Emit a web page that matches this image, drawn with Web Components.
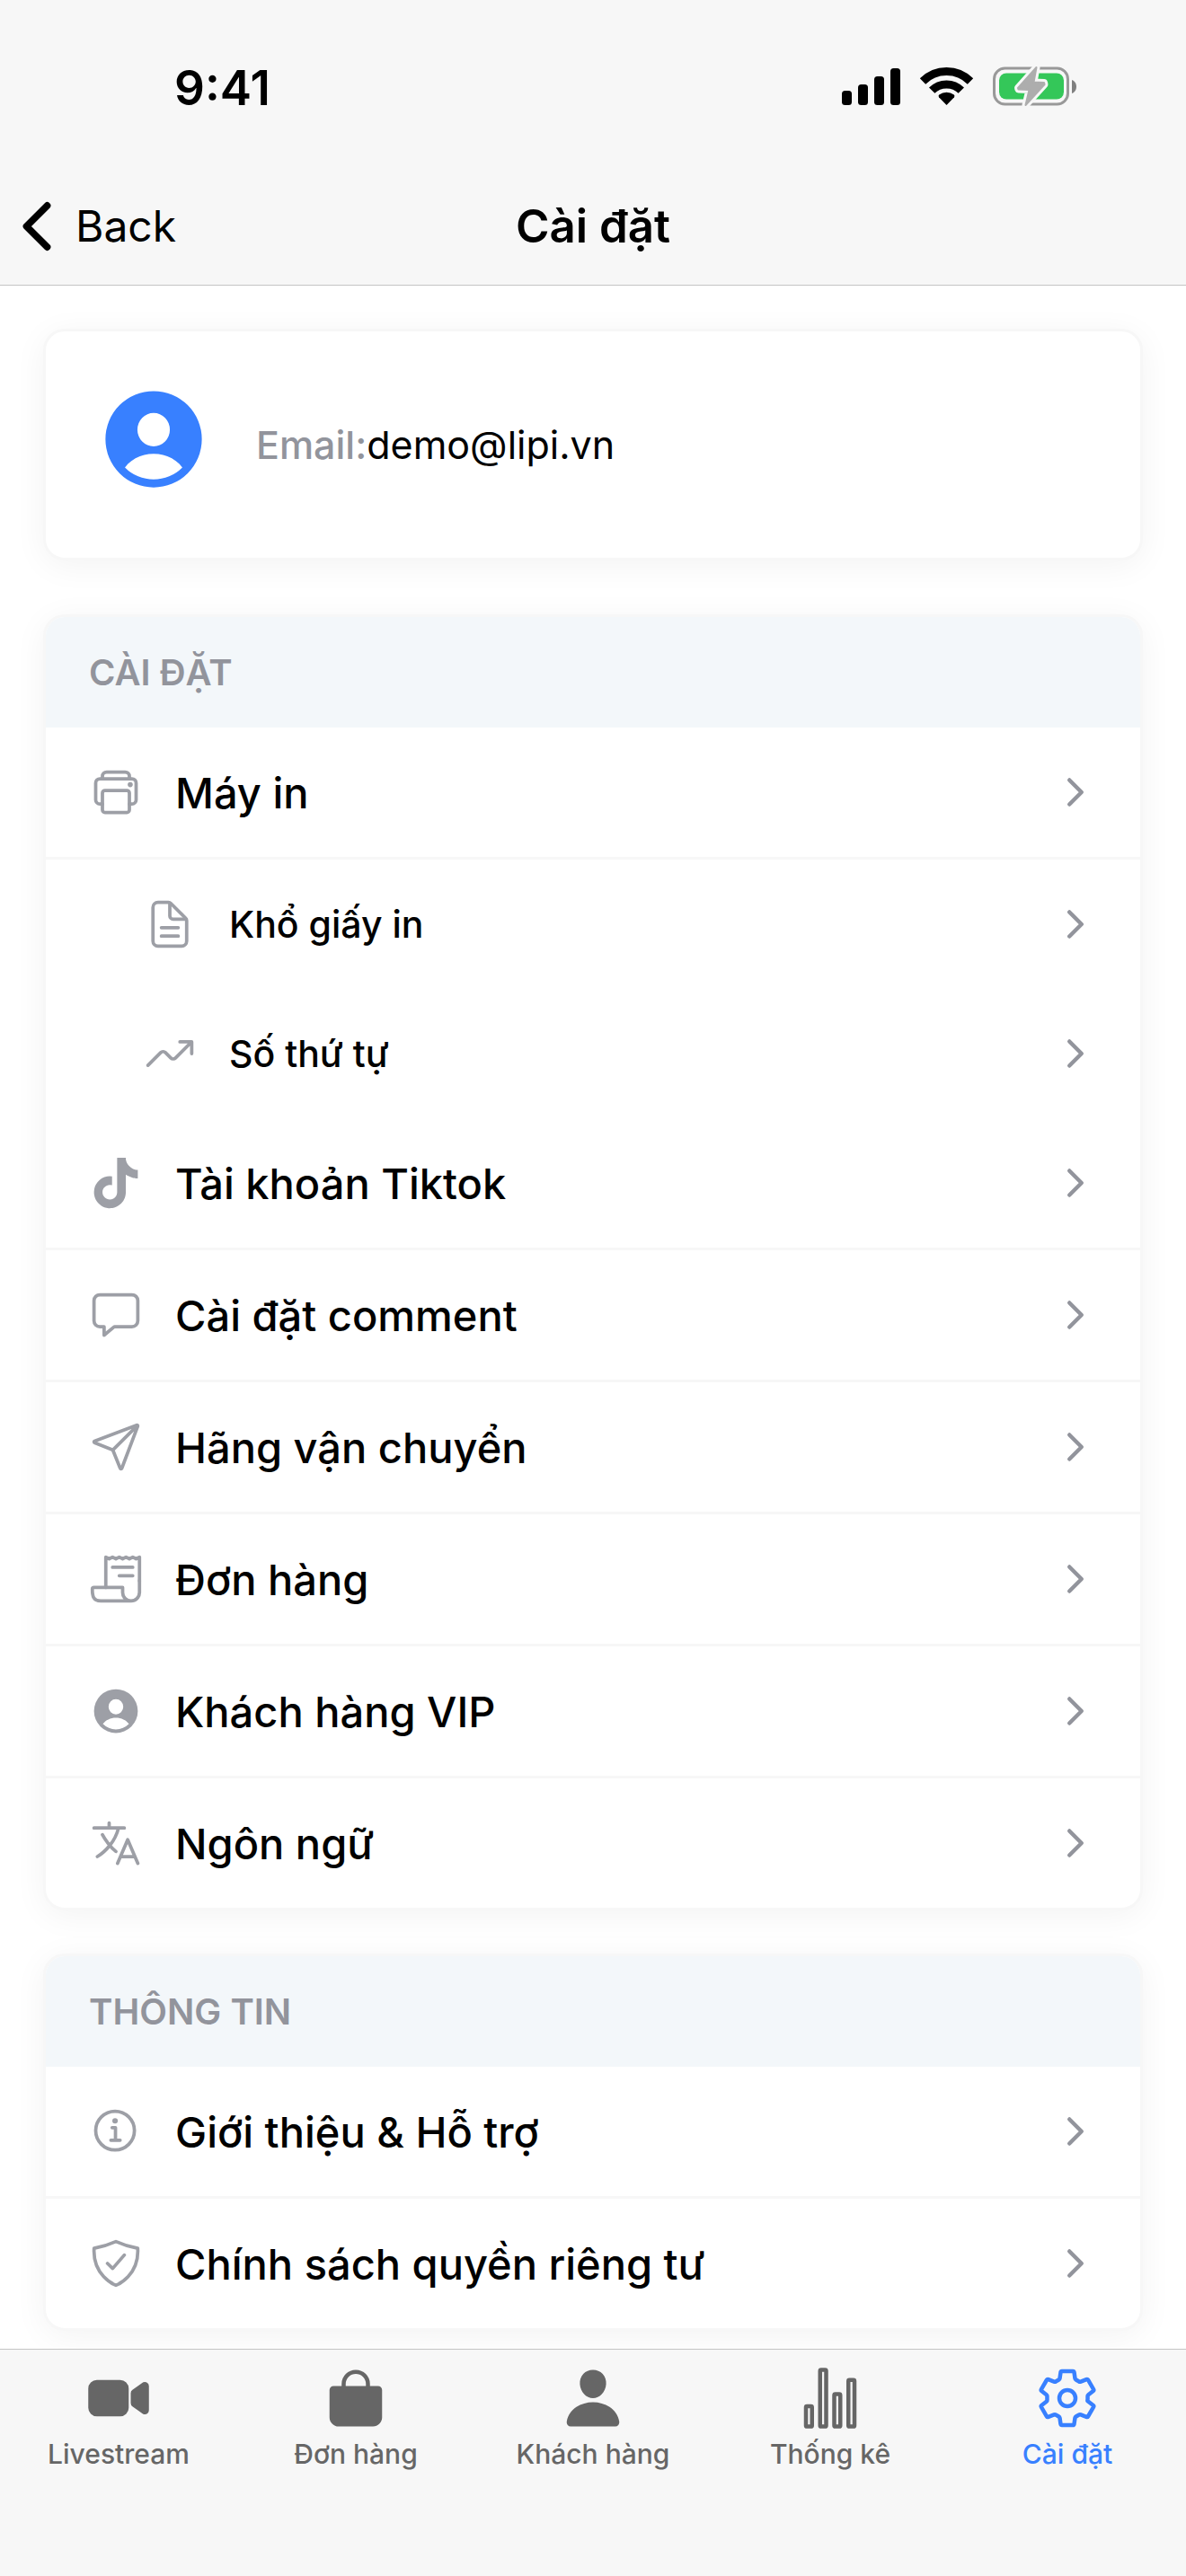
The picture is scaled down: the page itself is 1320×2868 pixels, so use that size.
<!DOCTYPE html>
<html lang="vi">
<head>
<meta charset="utf-8">
<meta name="viewport" content="width=device-width, initial-scale=1">
<title>Cài đặt</title>
<style>
    body {
        margin: 0;
        background: #fff;
        color: #000;
        font-family: Inter, "Noto Sans", "Liberation Sans", sans-serif;
    }
</style>
</head>
<body>

<template id="appIconTemplate">
    <style>
        :host {
            display: block;
            flex: none;
            width: var(--icon-size, 60px);
            height: var(--icon-size, 60px);
        }

        svg {
            display: block;
            width: 100%;
            height: 100%;
            fill: currentColor;
        }

        .line {
            fill: none;
            stroke: currentColor;
            stroke-width: 32;
            stroke-linecap: round;
            stroke-linejoin: round;
        }

        .bold {
            stroke-width: 48;
        }
    </style>
    <svg viewBox="0 0 512 512" aria-hidden="true"></svg>
</template>

<template id="statusBarTemplate">
    <style>
        :host {
            display: flex;
            box-sizing: border-box;
            height: 186px;
            padding: 10px 122px 0 194px;
            align-items: center;
            justify-content: space-between;
            font-size: 53px;
            font-weight: 600;
        }

        .icons {
            display: flex;
            align-items: center;
            gap: 23px;
            padding-bottom: 4px;
        }

        svg {
            display: block;
            overflow: visible;
        }
    </style>
    <slot></slot>
    <div class="icons">
        <svg width="65" height="42" viewBox="0 0 65 42" aria-hidden="true">
            <rect x="0" y="26" width="11" height="16" rx="3.5"/>
            <rect x="18" y="19" width="11" height="23" rx="3.5"/>
            <rect x="36" y="10" width="11" height="32" rx="3.5"/>
            <rect x="54" y="1" width="11" height="41" rx="3.5"/>
        </svg>
        <svg width="57" height="42" viewBox="0 0 57 42" aria-hidden="true">
            <g fill="none" stroke="#000" stroke-width="9">
                <path d="M2 15.5a37.5 37.5 0 0 1 53 0"/>
                <path d="M12.2 25.7a23 23 0 0 1 32.6 0"/>
            </g>
            <path d="M28.5 42L20 33.2a2 2 0 0 1 .2-2.6 13.4 13.4 0 0 1 16.6 0 2 2 0 0 1 .2 2.6z"/>
        </svg>
        <svg width="93" height="44" viewBox="0 0 93 44" aria-hidden="true">
            <rect x="1.5" y="2" width="82" height="40" rx="12" fill="none" stroke="#999" stroke-width="3"/>
            <rect x="7" y="7.5" width="72" height="29" rx="8" fill="#34c759"/>
            <path d="M88 15c3 1 5 4 5 7.5S91 29 88 30z" fill="#808080"/>
            <g stroke-linejoin="round">
                <path d="M48.5 1L28 24l.5 1.500 12 .5-4 17L57.500 20l-.5-2-11.500-.5z" fill="#f7f7f7" stroke="#f7f7f7" stroke-width="8"/>
                <path d="M48.5 1L28 24l.5 1.500 12 .5-4 17L57.500 20l-.5-2-11.500-.5z" fill="#adadad" stroke="#adadad" stroke-width="2"/>
            </g>
        </svg>
    </div>
</template>

<template id="navBarTemplate">
    <style>
        :host {
            display: grid;
            grid-template-columns: 1fr auto 1fr;
            align-items: center;
            height: 131px;
            border-bottom: 1px solid #c4c4c4;
            --icon-size: 82px;
        }

        button {
            display: flex;
            align-items: center;
            justify-self: start;
            gap: 2px;
            padding: 0;
            border: 0;
            background: none;
            color: inherit;
            font: inherit;
            font-size: 48px;
            cursor: pointer;
        }

        h1 {
            margin: 0;
            font-size: 51px;
            font-weight: 600;
        }
    </style>
    <button type="button"><app-icon name="chevron-back"></app-icon><slot name="back"></slot></button>
    <h1><slot></slot></h1>
</template>

<template id="profileCardTemplate">
    <style>
        :host {
            display: flex;
            align-items: center;
            gap: 48px;
            margin: 48px 48px 60px;
            padding: 54px;
            border: 3px solid #f7f7f7;
            border-radius: 24px;
            background: #fff;
            box-shadow: 0 6px 36px rgba(0, 0, 0, .05);
            font-size: 43px;
            --icon-size: 132px;
        }

        app-icon {
            margin-bottom: 12px;
            color: #3880ff;
        }

        .label {
            color: #92949c;
            font-weight: 500;
        }
    </style>
    <app-icon name="person-circle"></app-icon>
    <div><span class="label"><slot name="label"></slot></span><slot></slot></div>
</template>

<template id="settingsGroupTemplate">
    <style>
        :host {
            display: block;
            margin: 0 48px 48px;
            border: 3px solid #f7f7f7;
            border-radius: 24px;
            background: #fff;
            box-shadow: 0 6px 36px rgba(0, 0, 0, .05);
        }

        :host(:last-of-type) {
            margin-bottom: 0;
        }

        h2 {
            margin: 0;
            padding: 0 48px;
            border-radius: 21px 21px 0 0;
            background: #f3f7fa;
            color: #92949c;
            font-size: 40px;
            font-weight: 600;
            line-height: 123px;
        }
    </style>
    <h2><slot name="heading"></slot></h2>
    <slot></slot>
</template>

<template id="settingsItemTemplate">
    <style>
        :host {
            display: block;
            border-bottom: 3px solid #f7f7f7;
            font-size: 47px;
            font-weight: 500;
        }

        :host([plain]), :host(:last-child) {
            border-bottom: 0;
        }

        :host([sub]) {
            font-size: 41px;
        }

        a {
            display: flex;
            align-items: center;
            gap: 36px;
            min-height: 144px;
            padding: 0 48px;
            color: inherit;
            text-decoration: none;
        }

        :host([sub]) a {
            padding-left: 108px;
        }

        span {
            flex: 1;
        }

        .lead {
            color: #9d9fa6;
        }

        .arrow {
            color: #92949c;
            --icon-size: 48px;
        }
    </style>
    <a href="#">
        <app-icon class="lead"></app-icon>
        <span><slot></slot></span>
        <app-icon class="arrow" name="chevron-forward"></app-icon>
    </a>
</template>

<template id="tabItemTemplate">
    <style>
        :host {
            display: block;
            flex: 1 1 0;
            color: #666;
            font-size: 30px;
            font-weight: 500;
            line-height: 36px;
            --icon-size: 72px;
        }

        :host([selected]) {
            color: #3880ff;
        }

        a {
            display: flex;
            flex-direction: column;
            align-items: center;
            gap: 8px;
            color: inherit;
            text-decoration: none;
            white-space: nowrap;
        }
    </style>
    <a href="#">
        <app-icon></app-icon>
        <slot></slot>
    </a>
</template>

<template id="tabBarTemplate">
    <style>
        :host {
            display: block;
            position: sticky;
            bottom: 0;
            border-top: 1px solid #c4c4c4;
            background: #f7f7f7;
        }

        nav {
            display: flex;
            padding: 18px 0 118px;
        }
    </style>
    <nav><slot></slot></nav>
</template>

<template id="settingsPageTemplate">
    <style>
        :host {
            display: flex;
            flex-direction: column;
            min-height: 100vh;
        }

        header {
            background: #f7f7f7;
        }

        main {
            flex: 1;
            padding-bottom: 20px;
        }
    </style>
    <header><slot name="header"></slot></header>
    <main><slot></slot></main>
    <slot name="footer"></slot>
</template>

<settings-page>
    <status-bar slot="header">9:41</status-bar>
    <nav-bar slot="header"><span slot="back">Back</span>Cài đặt</nav-bar>

    <profile-card><span slot="label">Email:</span>demo@lipi.vn</profile-card>

    <settings-group>
        <span slot="heading">CÀI ĐẶT</span>
        <settings-item icon="print">Máy in</settings-item>
        <settings-item icon="document" sub plain>Khổ giấy in</settings-item>
        <settings-item icon="trending" sub plain>Số thứ tự</settings-item>
        <settings-item icon="tiktok">Tài khoản Tiktok</settings-item>
        <settings-item icon="chatbox">Cài đặt comment</settings-item>
        <settings-item icon="paper-plane">Hãng vận chuyển</settings-item>
        <settings-item icon="receipt">Đơn hàng</settings-item>
        <settings-item icon="person-circle">Khách hàng VIP</settings-item>
        <settings-item icon="language">Ngôn ngữ</settings-item>
    </settings-group>

    <settings-group>
        <span slot="heading">THÔNG TIN</span>
        <settings-item icon="information">Giới thiệu &amp; Hỗ trợ</settings-item>
        <settings-item icon="shield">Chính sách quyền riêng tư</settings-item>
    </settings-group>

    <tab-bar slot="footer">
        <tab-item icon="videocam">Livestream</tab-item>
        <tab-item icon="bag">Đơn hàng</tab-item>
        <tab-item icon="person">Khách hàng</tab-item>
        <tab-item icon="stats">Thống kê</tab-item>
        <tab-item icon="settings" selected>Cài đặt</tab-item>
    </tab-bar>
</settings-page>

<script>
'use strict'

// Icon drawings, all on a 512x512 grid.
const ICONS = {
    'chevron-back': `<path class="line bold" d="M328 112L184 256l144 144"/>`,
    'chevron-forward': `<path class="line bold" d="M184 112l144 144-144 144"/>`,
    'person-circle': `<path fill-rule="evenodd" d="M256 48a208 208 0 1 0 0 416 208 208 0 0 0 0-416zm0 95a70 72 0 1 1 0 144 70 72 0 0 1 0-144zM132 378c26-36 72-59 124-59s98 23 124 59a174 174 0 0 1-248 0z"/>`,
    'print': `<path class="line" d="M384 368h24a40 40 0 0 0 40-40V168a40 40 0 0 0-40-40H104a40 40 0 0 0-40 40v160a40 40 0 0 0 40 40h24"/>
        <rect class="line" x="128" y="240" width="256" height="208" rx="24"/>
        <path class="line" d="M384 128v-24a40 40 0 0 0-40-40H168a40 40 0 0 0-40 40v24"/>
        <circle cx="392" cy="184" r="24"/>`,
    'document': `<path class="line" d="M416 221.3V416a48 48 0 0 1-48 48H144a48 48 0 0 1-48-48V96a48 48 0 0 1 48-48h98.700a32 32 0 0 1 22.700 9.400l141.200 141.200a32 32 0 0 1 9.400 22.700z"/>
        <path class="line" d="M256 56v120a32 32 0 0 0 32 32h120M176 288h160M176 368h160"/>`,
    'trending': `<path class="line" d="M352 144h112v112M48 368l121.400-121.400a32 32 0 0 1 45.200 0l50.800 50.800a32 32 0 0 0 45.200 0L448 160"/>`,
    'tiktok': `<path d="M412.190 118.660a109.270 109.270 0 0 1-9.450-5.500 132.870 132.870 0 0 1-24.270-20.620c-18.100-20.710-24.860-41.720-27.350-56.430h.1C349.140 23.900 350 16 350.130 16h-82.440v318.780c0 4.280 0 8.510-.18 12.690l-.13 2.450a70 70 0 0 1-35.220 55.560 68.800 68.800 0 0 1-34.110 9c-38.410 0-69.540-31.320-69.540-70s31.130-70 69.540-70a68.900 68.900 0 0 1 21.410 3.390l.1-83.940a153.140 153.140 0 0 0-118 34.520 161.790 161.790 0 0 0-35.300 43.530c-3.480 6-16.610 30.110-18.200 69.240-1 22.210 5.670 45.220 8.850 54.730v.2c2 5.600 9.750 24.710 22.380 40.820A167.530 167.530 0 0 0 115 470.660c39.910 27.120 84.360 25.340 84.360 25.340 7.660-.31 33.320 0 62.460-13.810 32.320-15.310 50.720-38.120 50.720-38.120a158.460 158.460 0 0 0 27.640-45.930c7.460-19.610 9.950-43.130 9.950-52.530V176.490c1 .6 14.320 9.410 14.320 9.410s19.190 12.300 49.130 20.310c21.480 5.700 50.420 6.900 50.420 6.900v-81.840c-10.140 1.100-30.730-2.100-51.810-12.610z"/>`,
    'chatbox': `<path class="line" d="M408 64H104a56 56 0 0 0-56 56v192a56 56 0 0 0 56 56h40v80l93.720-78.140a8 8 0 0 1 5.130-1.860H408a56 56 0 0 0 56-56V120a56 56 0 0 0-56-56z"/>`,
    'paper-plane': `<path class="line" d="M53.120 199.940l400-151.390a8 8 0 0 1 10.330 10.330l-151.390 400a8 8 0 0 1-15-.34l-67.400-166.090a16 16 0 0 0-10.110-10.110L53.460 215a8 8 0 0 1-.34-15.060zM460 52L227 285"/>`,
    'receipt': `<path class="line" d="M160 336V48l32 16 32-16 32 16 32-16 32 16 32-16 32 16 32-16 32 16 32-16v224"/>
        <path class="line" d="M480 272v112a80 80 0 0 1-160 0v-48H48a16 16 0 0 0-16 16c0 64 6.740 112 80 112h288M224 144h192M288 224h128"/>`,
    'language': `<path class="line" d="M48 112h288M192 64v48M272 448l96-224 96 224M301.500 384h133M281.300 112S257 206 199 277 80 384 80 384M256 336s-35-27-72-75-56-85-56-85"/>`,
    'information': `<circle class="line" cx="248" cy="248" r="184"/>
        <path class="line" d="M220 220h32v116M208 340h88"/>
        <circle cx="248" cy="156" r="26"/>`,
    'shield': `<path class="line" d="M336 176L225.200 304 176 255.800M463.100 112.370C373.680 96.330 336.710 84.450 256 48c-80.710 36.450-117.680 48.330-207.100 64.370C32.700 369.130 240.580 457.790 256 464c15.420-6.210 223.300-94.870 207.100-351.630z"/>`,
    'videocam': `<path d="M464 384.390a32 32 0 0 1-13-2.770 15.770 15.770 0 0 1-2.710-1.540l-82.710-58.220A32 32 0 0 1 352 295.700v-79.400a32 32 0 0 1 13.580-26.160l82.710-58.220a15.770 15.770 0 0 1 2.710-1.540 32 32 0 0 1 45 29.240v192.760a32 32 0 0 1-32 32zM268 400H84a68 68 0 0 1-68-68V180a68 68 0 0 1 68-68h184a68 68 0 0 1 68 68v152a68 68 0 0 1-68 68z"/>`,
    'bag': `<path fill-rule="evenodd" d="M432 160h-64v-16a112 112 0 0 0-224 0v16H80a32 32 0 0 0-32 32v216c0 39 33 72 72 72h272c39 0 72-32 72-71V192a32 32 0 0 0-32-32zM176 144a80 80 0 0 1 160 0v16H176z"/>`,
    'person': `<path d="M332.640 64.580C313.180 43.570 286 32 256 32c-30.160 0-57.430 11.500-76.800 32.380-19.580 21.110-29.120 49.800-26.880 80.780C156.760 206.280 203.270 256 256 256s99.160-49.710 103.670-110.820c2.270-30.700-7.330-59.330-27.030-80.600zM432 480H80a31 31 0 0 1-24.200-11.130c-6.500-7.770-9.120-18.380-7.180-29.110C57.060 392.940 83.400 353.610 124.800 326c36.780-24.510 83.370-38 131.200-38s94.420 13.500 131.200 38c41.400 27.600 67.740 66.930 76.180 113.750 1.940 10.730-.68 21.340-7.180 29.110A31 31 0 0 1 432 480z"/>`,
    'stats': `<rect class="line" x="64" y="320" width="48" height="160" rx="8"/>
        <rect class="line" x="288" y="224" width="48" height="256" rx="8"/>
        <rect class="line" x="400" y="112" width="48" height="368" rx="8"/>
        <rect class="line" x="176" y="32" width="48" height="448" rx="8"/>`,
    'settings': `<circle class="line" cx="256" cy="256" r="64"/>
        <path class="line" d="M416.390 256a154.340 154.340 0 0 1-1.530 20.790l45.210 35.460a10.810 10.810 0 0 1 2.450 13.750l-42.770 74a10.810 10.810 0 0 1-13.140 4.590l-44.900-18.080a16.110 16.110 0 0 0-15.170 1.750A164.480 164.480 0 0 1 325 400.800a15.940 15.940 0 0 0-8.820 12.140l-6.730 47.890a11.080 11.080 0 0 1-10.680 9.170h-85.540a11.110 11.110 0 0 1-10.690-8.870l-6.720-47.820a16.070 16.070 0 0 0-9-12.220 155.300 155.300 0 0 1-21.460-12.570 16 16 0 0 0-15.110-1.710l-44.890 18.070a10.810 10.810 0 0 1-13.140-4.580l-42.770-74a10.800 10.800 0 0 1 2.450-13.750l38.210-30a16.050 16.050 0 0 0 6-14.080c-.36-4.170-.58-8.330-.58-12.500s.21-8.270.58-12.350a16 16 0 0 0-6.070-13.940l-38.190-30A10.810 10.810 0 0 1 49.480 186l42.770-74a10.810 10.810 0 0 1 13.140-4.590l44.900 18.080a16.110 16.110 0 0 0 15.170-1.750A164.480 164.480 0 0 1 187 111.200a15.940 15.940 0 0 0 8.820-12.140l6.730-47.890A11.080 11.080 0 0 1 213.230 42h85.540a11.110 11.110 0 0 1 10.690 8.870l6.720 47.820a16.070 16.070 0 0 0 9 12.220 155.300 155.300 0 0 1 21.460 12.570 16 16 0 0 0 15.110 1.710l44.890-18.070a10.810 10.810 0 0 1 13.140 4.580l42.770 74a10.800 10.800 0 0 1-2.450 13.750l-38.210 30a16.050 16.050 0 0 0-6.050 14.080c.33 4.140.55 8.300.55 12.470z"/>`
}

// Base class: clones the template with the given id into a shadow root.
class TemplateElement extends HTMLElement {

    constructor(templateId) {
        super()

        let template = document.getElementById(templateId)
        let shadowDom = this.attachShadow( { mode: 'open' } )
        shadowDom.appendChild(document.importNode(template.content, true))
    }

}

class AppIcon extends TemplateElement {

    static get observedAttributes() {
        return ['name']
    }

    constructor() {
        super('appIconTemplate')
    }

    attributeChangedCallback(attribute, oldValue, newValue) {
        this.shadowRoot.querySelector('svg').innerHTML = ICONS[newValue] || ''
    }

}

class StatusBar extends TemplateElement {
    constructor() { super('statusBarTemplate') }
}

class NavBar extends TemplateElement {

    constructor() {
        super('navBarTemplate')
        this.shadowRoot.querySelector('button').addEventListener('click', () => history.back())
    }

}

class ProfileCard extends TemplateElement {
    constructor() { super('profileCardTemplate') }
}

class SettingsGroup extends TemplateElement {
    constructor() { super('settingsGroupTemplate') }
}

class SettingsItem extends TemplateElement {

    constructor() {
        super('settingsItemTemplate')
    }

    connectedCallback() {
        this.shadowRoot.querySelector('.lead').setAttribute('name', this.getAttribute('icon'))
    }

}

class TabItem extends TemplateElement {

    constructor() {
        super('tabItemTemplate')
    }

    connectedCallback() {
        this.shadowRoot.querySelector('app-icon').setAttribute('name', this.getAttribute('icon'))

        if (this.hasAttribute('selected')) {
            this.shadowRoot.querySelector('a').setAttribute('aria-current', 'page')
        }
    }

}

class TabBar extends TemplateElement {
    constructor() { super('tabBarTemplate') }
}

class SettingsPage extends TemplateElement {
    constructor() { super('settingsPageTemplate') }
}

customElements.define('app-icon', AppIcon)
customElements.define('status-bar', StatusBar)
customElements.define('nav-bar', NavBar)
customElements.define('profile-card', ProfileCard)
customElements.define('settings-group', SettingsGroup)
customElements.define('settings-item', SettingsItem)
customElements.define('tab-item', TabItem)
customElements.define('tab-bar', TabBar)
customElements.define('settings-page', SettingsPage)

</script>
</body>
</html>
